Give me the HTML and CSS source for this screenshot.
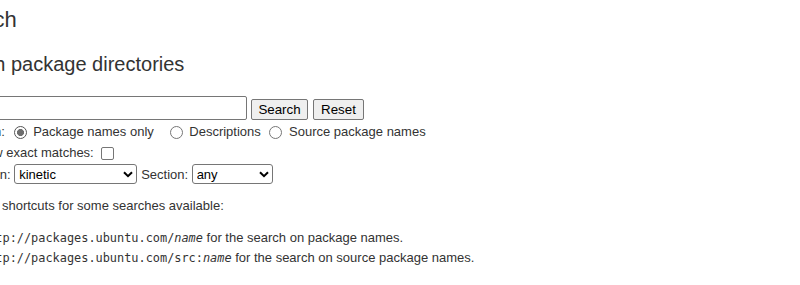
FILE: index.html
```html
<!DOCTYPE html>
<html lang="en">
<head>
<meta charset="utf-8">
<title>Search</title>
<link rel="stylesheet" href="styles.css">
</head>
<body>
<div class="page">
  <h1 class="title">Search</h1>
  <h2 class="subtitle">Search package directories</h2>
  <form class="search-form" action="#">
    <div class="row row-keyword">
      <input class="kw" type="text" name="keywords" aria-label="Keyword">
      <button class="btn btn-search" type="button">Search</button>
      <button class="btn btn-reset" type="reset">Reset</button>
    </div>
    <div class="row row-on">
      <span class="keyword">Search on:</span> <input class="radio" type="radio" name="searchon" id="onlynames" checked> <label for="onlynames">Package names only</label>&nbsp;&nbsp; <input class="radio" type="radio" name="searchon" id="descs"> <label for="descs">Descriptions</label> <input class="radio" type="radio" name="searchon" id="src"> <label for="src">Source package names</label>
    </div>
    <div class="row row-exact">
      <span class="keyword">Only show exact matches:</span> <input class="check" type="checkbox" id="exact">
    </div>
    <div class="row row-suite">
      <span class="keyword">Distribution:</span>
      <span class="select-wrap sel-distro">
        <select class="sel" aria-label="Distribution"><option>kinetic</option></select>
        <svg class="chev" width="10" height="7" viewBox="0 0 10 7"><path d="M1 1.2 L5 5.2 L9 1.2" fill="none" stroke="#000" stroke-width="2"/></svg>
      </span>
      <span class="keyword kw-section">Section:</span>
      <span class="select-wrap sel-section">
        <select class="sel" aria-label="Section"><option>any</option></select>
        <svg class="chev" width="10" height="7" viewBox="0 0 10 7"><path d="M1 1.2 L5 5.2 L9 1.2" fill="none" stroke="#000" stroke-width="2"/></svg>
      </span>
    </div>
  </form>
  <p class="note">There are shortcuts for some searches available:</p>
  <ul class="shortcuts">
    <li><code>http://packages.ubuntu.com/<var>name</var></code> for the search on package names.</li>
    <li><code>http://packages.ubuntu.com/src:<var>name</var></code> for the search on source package names.</li>
  </ul>
</div>
</body>
</html>
```
FILE: styles.css
```css
html, body {
  margin: 0;
  background: #fff;
}
body {
  font-family: "Liberation Sans", Arial, sans-serif;
  font-size: 13px;
  color: #333;
  overflow: hidden;
}
.page {
  margin-left: -58px;
}
.title {
  font-size: 22px;
  font-weight: normal;
  line-height: 26px;
  margin: 7px 0 0 5px;
}
.subtitle {
  font-size: 20px;
  font-weight: normal;
  line-height: 24px;
  margin: 19px 0 0;
}
.search-form {
  margin: 20px 0 0;
}
.row {
  white-space: nowrap;
}
.row-keyword {
  display: flex;
  align-items: flex-end;
  height: 24px;
}
.kw {
  box-sizing: border-box;
  width: 305px;
  height: 24px;
  margin: 0;
  border: 1px solid #767676;
  border-radius: 2px;
  background: #fff;
}
.btn {
  box-sizing: border-box;
  height: 21px;
  margin: 0;
  padding: 0;
  border: 1px solid #767676;
  border-radius: 2px;
  background: #efefef;
  font-family: "Liberation Sans", Arial, sans-serif;
  font-size: 13.33px;
  color: #000;
}
.btn-search {
  width: 57px;
  margin-left: 4px;
}
.btn-reset {
  width: 51px;
  margin-left: 5px;
}
.row-on {
  height: 20px;
  line-height: 20px;
  margin-top: 2px;
}
.radio {
  appearance: none;
  box-sizing: border-box;
  width: 13px;
  height: 13px;
  margin: 0 3px 0 5px;
  border: 1px solid #767676;
  border-radius: 50%;
  background: #fff;
  vertical-align: middle;
}
.radio:checked {
  border-color: #555;
  background: radial-gradient(circle, #6e6e6e 0 3.2px, #fff 3.8px);
}
.row-exact {
  height: 21px;
  line-height: 21px;
}
.check {
  appearance: none;
  box-sizing: border-box;
  width: 13px;
  height: 13px;
  margin: 0 3px 0 4px;
  border: 1px solid #767676;
  border-radius: 2px;
  background: #fff;
  vertical-align: middle;
}
.row-suite {
  display: flex;
  align-items: center;
  height: 22px;
}
.select-wrap {
  position: relative;
  display: block;
  margin-left: 3.5px;
}
.sel {
  appearance: none;
  box-sizing: border-box;
  display: block;
  height: 20px;
  margin: 0;
  padding: 0 0 0 4px;
  border: 1px solid #767676;
  border-radius: 3px;
  background: #fff;
  font-family: "Liberation Sans", Arial, sans-serif;
  font-size: 13px;
  color: #000;
}
.sel-distro .sel {
  width: 123px;
}
.sel-section .sel {
  width: 81px;
}
.chev {
  position: absolute;
  right: 4px;
  top: 7px;
}
.kw-section {
  margin-left: 4px;
}
.note {
  margin: 11px 0 0;
  line-height: 20px;
}
.shortcuts {
  margin: 12px 0 0;
  padding-left: 39px;
  line-height: 20px;
}
code {
  font-family: "DejaVu Sans Mono", monospace;
  font-size: 11.9px;
}
var {
  font-style: italic;
}
```
